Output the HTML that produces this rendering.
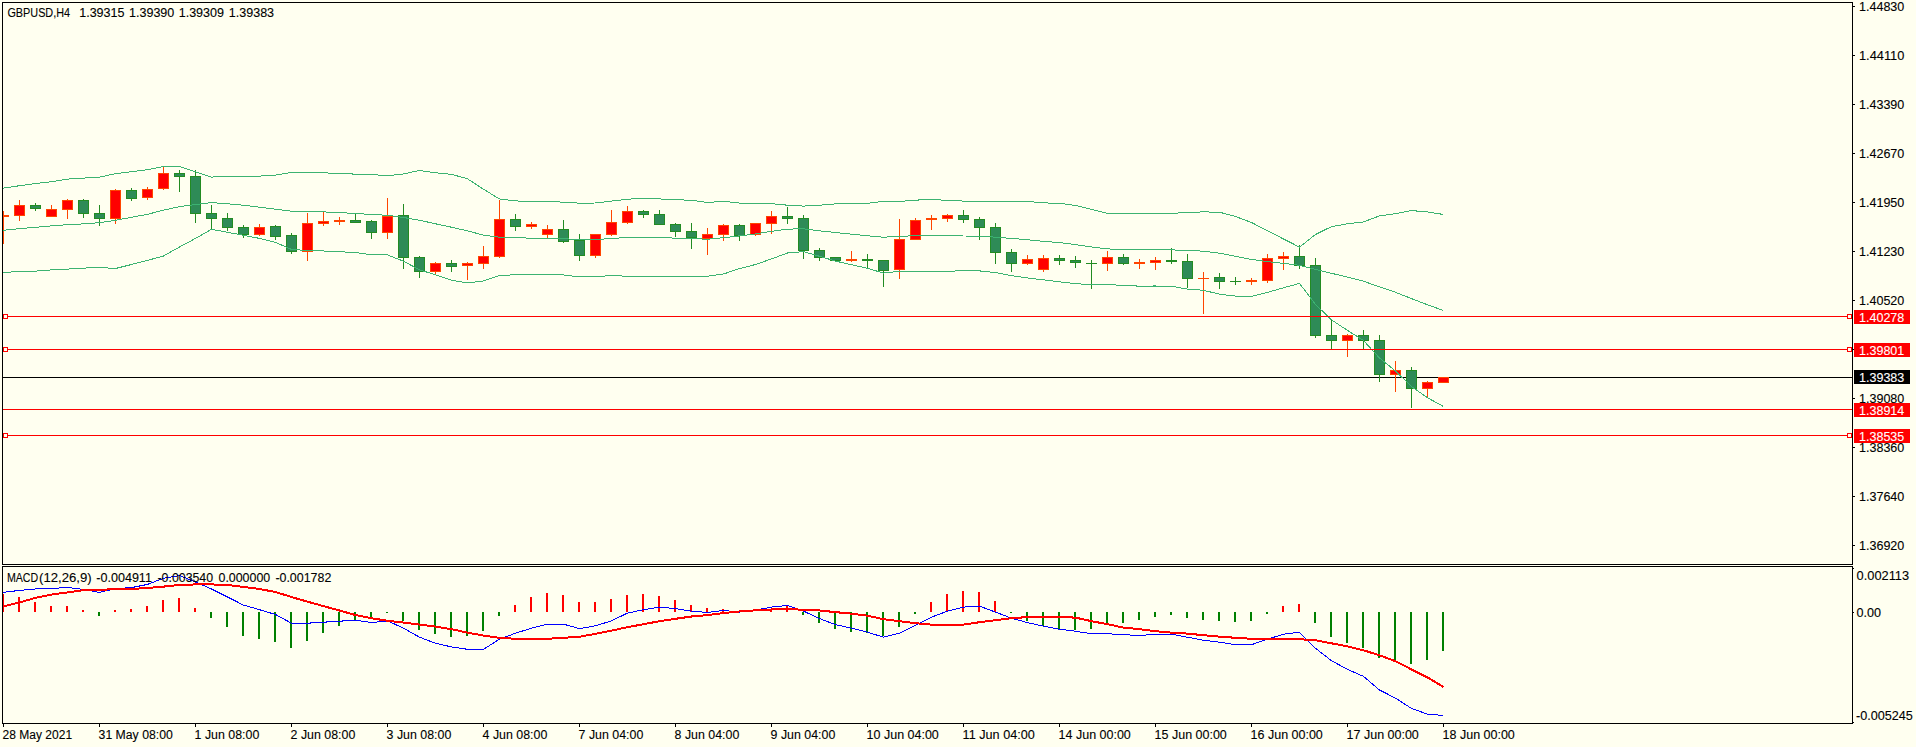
<!DOCTYPE html>
<html><head><meta charset="utf-8"><title>GBPUSD,H4</title>
<style>
html,body{margin:0;padding:0;background:#FFFFF0;}
body{width:1916px;height:747px;overflow:hidden;position:relative;}
svg{position:absolute;left:0;top:0;display:block;}
text{font-family:"Liberation Sans",sans-serif;font-size:12.5px;fill:#000;stroke:#000;stroke-width:0.1px;}
.w{fill:#fff;stroke:#fff;}
</style></head><body>
<svg width="1916" height="747" viewBox="0 0 1916 747">
<rect x="0" y="0" width="1916" height="747" fill="#FFFFF0"/>
<g shape-rendering="crispEdges">
<rect x="2" y="2" width="1851" height="1" fill="#000"/>
<rect x="2" y="564" width="1851" height="1" fill="#000"/>
<rect x="2" y="2" width="1" height="563" fill="#000"/>
<rect x="1852" y="2" width="1" height="563" fill="#000"/>
<rect x="2" y="566" width="1851" height="1" fill="#000"/>
<rect x="2" y="723" width="1851" height="1" fill="#000"/>
<rect x="2" y="566" width="1" height="158" fill="#000"/>
<rect x="1852" y="566" width="1" height="158" fill="#000"/>
<rect x="3" y="377" width="1849" height="1" fill="#000"/>
<g id="candles">
<rect x="3" y="211" width="1" height="33" fill="#FF4500"/>
<rect x="3" y="215" width="6" height="2" fill="#FF4500"/>
<rect x="19" y="200" width="1" height="21" fill="#FF4500"/>
<rect x="14" y="205" width="11" height="11" fill="#FF4500"/>
<rect x="15" y="206" width="9" height="9" fill="#FF0000"/>
<rect x="35" y="203" width="1" height="8" fill="#228B22"/>
<rect x="30" y="205" width="11" height="4" fill="#228B22"/>
<rect x="31" y="206" width="9" height="2" fill="#2E8B57"/>
<rect x="51" y="205" width="1" height="12" fill="#FF4500"/>
<rect x="46" y="209" width="11" height="8" fill="#FF4500"/>
<rect x="47" y="210" width="9" height="6" fill="#FF0000"/>
<rect x="67" y="199" width="1" height="20" fill="#FF4500"/>
<rect x="62" y="200" width="11" height="10" fill="#FF4500"/>
<rect x="63" y="201" width="9" height="8" fill="#FF0000"/>
<rect x="83" y="199" width="1" height="19" fill="#228B22"/>
<rect x="78" y="200" width="11" height="14" fill="#228B22"/>
<rect x="79" y="201" width="9" height="12" fill="#2E8B57"/>
<rect x="99" y="205" width="1" height="21" fill="#228B22"/>
<rect x="94" y="213" width="11" height="6" fill="#228B22"/>
<rect x="95" y="214" width="9" height="4" fill="#2E8B57"/>
<rect x="115" y="189" width="1" height="35" fill="#FF4500"/>
<rect x="110" y="190" width="11" height="29" fill="#FF4500"/>
<rect x="111" y="191" width="9" height="27" fill="#FF0000"/>
<rect x="131" y="188" width="1" height="13" fill="#228B22"/>
<rect x="126" y="190" width="11" height="9" fill="#228B22"/>
<rect x="127" y="191" width="9" height="7" fill="#2E8B57"/>
<rect x="147" y="187" width="1" height="13" fill="#FF4500"/>
<rect x="142" y="189" width="11" height="9" fill="#FF4500"/>
<rect x="143" y="190" width="9" height="7" fill="#FF0000"/>
<rect x="163" y="167" width="1" height="23" fill="#FF4500"/>
<rect x="158" y="173" width="11" height="16" fill="#FF4500"/>
<rect x="159" y="174" width="9" height="14" fill="#FF0000"/>
<rect x="179" y="170" width="1" height="22" fill="#228B22"/>
<rect x="174" y="173" width="11" height="4" fill="#228B22"/>
<rect x="175" y="174" width="9" height="2" fill="#2E8B57"/>
<rect x="195" y="170" width="1" height="53" fill="#228B22"/>
<rect x="190" y="176" width="11" height="38" fill="#228B22"/>
<rect x="191" y="177" width="9" height="36" fill="#2E8B57"/>
<rect x="211" y="205" width="1" height="25" fill="#228B22"/>
<rect x="206" y="213" width="11" height="6" fill="#228B22"/>
<rect x="207" y="214" width="9" height="4" fill="#2E8B57"/>
<rect x="227" y="213" width="1" height="18" fill="#228B22"/>
<rect x="222" y="218" width="11" height="10" fill="#228B22"/>
<rect x="223" y="219" width="9" height="8" fill="#2E8B57"/>
<rect x="243" y="225" width="1" height="13" fill="#228B22"/>
<rect x="238" y="227" width="11" height="8" fill="#228B22"/>
<rect x="239" y="228" width="9" height="6" fill="#2E8B57"/>
<rect x="259" y="224" width="1" height="12" fill="#FF4500"/>
<rect x="254" y="227" width="11" height="8" fill="#FF4500"/>
<rect x="255" y="228" width="9" height="6" fill="#FF0000"/>
<rect x="275" y="225" width="1" height="15" fill="#228B22"/>
<rect x="270" y="226" width="11" height="11" fill="#228B22"/>
<rect x="271" y="227" width="9" height="9" fill="#2E8B57"/>
<rect x="291" y="233" width="1" height="21" fill="#228B22"/>
<rect x="286" y="235" width="11" height="17" fill="#228B22"/>
<rect x="287" y="236" width="9" height="15" fill="#2E8B57"/>
<rect x="307" y="213" width="1" height="48" fill="#FF4500"/>
<rect x="302" y="223" width="11" height="29" fill="#FF4500"/>
<rect x="303" y="224" width="9" height="27" fill="#FF0000"/>
<rect x="323" y="212" width="1" height="14" fill="#FF4500"/>
<rect x="318" y="221" width="11" height="3" fill="#FF4500"/>
<rect x="319" y="222" width="9" height="1" fill="#FF0000"/>
<rect x="339" y="217" width="1" height="8" fill="#FF4500"/>
<rect x="334" y="220" width="11" height="2" fill="#FF4500"/>
<rect x="355" y="214" width="1" height="9" fill="#228B22"/>
<rect x="350" y="220" width="11" height="3" fill="#228B22"/>
<rect x="351" y="221" width="9" height="1" fill="#2E8B57"/>
<rect x="371" y="220" width="1" height="19" fill="#228B22"/>
<rect x="366" y="221" width="11" height="12" fill="#228B22"/>
<rect x="367" y="222" width="9" height="10" fill="#2E8B57"/>
<rect x="387" y="198" width="1" height="41" fill="#FF4500"/>
<rect x="382" y="216" width="11" height="17" fill="#FF4500"/>
<rect x="383" y="217" width="9" height="15" fill="#FF0000"/>
<rect x="403" y="204" width="1" height="65" fill="#228B22"/>
<rect x="398" y="215" width="11" height="43" fill="#228B22"/>
<rect x="399" y="216" width="9" height="41" fill="#2E8B57"/>
<rect x="419" y="256" width="1" height="22" fill="#228B22"/>
<rect x="414" y="257" width="11" height="15" fill="#228B22"/>
<rect x="415" y="258" width="9" height="13" fill="#2E8B57"/>
<rect x="435" y="262" width="1" height="12" fill="#FF4500"/>
<rect x="430" y="263" width="11" height="9" fill="#FF4500"/>
<rect x="431" y="264" width="9" height="7" fill="#FF0000"/>
<rect x="451" y="260" width="1" height="12" fill="#228B22"/>
<rect x="446" y="263" width="11" height="4" fill="#228B22"/>
<rect x="447" y="264" width="9" height="2" fill="#2E8B57"/>
<rect x="467" y="262" width="1" height="18" fill="#FF4500"/>
<rect x="462" y="263" width="11" height="3" fill="#FF4500"/>
<rect x="463" y="264" width="9" height="1" fill="#FF0000"/>
<rect x="483" y="246" width="1" height="23" fill="#FF4500"/>
<rect x="478" y="256" width="11" height="8" fill="#FF4500"/>
<rect x="479" y="257" width="9" height="6" fill="#FF0000"/>
<rect x="499" y="200" width="1" height="58" fill="#FF4500"/>
<rect x="494" y="219" width="11" height="38" fill="#FF4500"/>
<rect x="495" y="220" width="9" height="36" fill="#FF0000"/>
<rect x="515" y="214" width="1" height="17" fill="#228B22"/>
<rect x="510" y="219" width="11" height="8" fill="#228B22"/>
<rect x="511" y="220" width="9" height="6" fill="#2E8B57"/>
<rect x="531" y="222" width="1" height="7" fill="#FF4500"/>
<rect x="526" y="224" width="11" height="3" fill="#FF4500"/>
<rect x="527" y="225" width="9" height="1" fill="#FF0000"/>
<rect x="547" y="225" width="1" height="13" fill="#FF4500"/>
<rect x="542" y="229" width="11" height="6" fill="#FF4500"/>
<rect x="543" y="230" width="9" height="4" fill="#FF0000"/>
<rect x="563" y="220" width="1" height="23" fill="#228B22"/>
<rect x="558" y="229" width="11" height="13" fill="#228B22"/>
<rect x="559" y="230" width="9" height="11" fill="#2E8B57"/>
<rect x="579" y="234" width="1" height="27" fill="#228B22"/>
<rect x="574" y="240" width="11" height="16" fill="#228B22"/>
<rect x="575" y="241" width="9" height="14" fill="#2E8B57"/>
<rect x="595" y="234" width="1" height="24" fill="#FF4500"/>
<rect x="590" y="234" width="11" height="22" fill="#FF4500"/>
<rect x="591" y="235" width="9" height="20" fill="#FF0000"/>
<rect x="611" y="210" width="1" height="26" fill="#FF4500"/>
<rect x="606" y="222" width="11" height="13" fill="#FF4500"/>
<rect x="607" y="223" width="9" height="11" fill="#FF0000"/>
<rect x="627" y="206" width="1" height="18" fill="#FF4500"/>
<rect x="622" y="211" width="11" height="12" fill="#FF4500"/>
<rect x="623" y="212" width="9" height="10" fill="#FF0000"/>
<rect x="643" y="210" width="1" height="8" fill="#228B22"/>
<rect x="638" y="211" width="11" height="4" fill="#228B22"/>
<rect x="639" y="212" width="9" height="2" fill="#2E8B57"/>
<rect x="659" y="210" width="1" height="15" fill="#228B22"/>
<rect x="654" y="214" width="11" height="11" fill="#228B22"/>
<rect x="655" y="215" width="9" height="9" fill="#2E8B57"/>
<rect x="675" y="223" width="1" height="14" fill="#228B22"/>
<rect x="670" y="224" width="11" height="8" fill="#228B22"/>
<rect x="671" y="225" width="9" height="6" fill="#2E8B57"/>
<rect x="691" y="223" width="1" height="26" fill="#228B22"/>
<rect x="686" y="231" width="11" height="7" fill="#228B22"/>
<rect x="687" y="232" width="9" height="5" fill="#2E8B57"/>
<rect x="707" y="228" width="1" height="27" fill="#FF4500"/>
<rect x="702" y="234" width="11" height="5" fill="#FF4500"/>
<rect x="703" y="235" width="9" height="3" fill="#FF0000"/>
<rect x="723" y="224" width="1" height="17" fill="#FF4500"/>
<rect x="718" y="225" width="11" height="10" fill="#FF4500"/>
<rect x="719" y="226" width="9" height="8" fill="#FF0000"/>
<rect x="739" y="224" width="1" height="17" fill="#228B22"/>
<rect x="734" y="225" width="11" height="11" fill="#228B22"/>
<rect x="735" y="226" width="9" height="9" fill="#2E8B57"/>
<rect x="755" y="223" width="1" height="13" fill="#FF4500"/>
<rect x="750" y="223" width="11" height="12" fill="#FF4500"/>
<rect x="751" y="224" width="9" height="10" fill="#FF0000"/>
<rect x="771" y="211" width="1" height="23" fill="#FF4500"/>
<rect x="766" y="216" width="11" height="8" fill="#FF4500"/>
<rect x="767" y="217" width="9" height="6" fill="#FF0000"/>
<rect x="787" y="207" width="1" height="17" fill="#228B22"/>
<rect x="782" y="216" width="11" height="3" fill="#228B22"/>
<rect x="783" y="217" width="9" height="1" fill="#2E8B57"/>
<rect x="803" y="215" width="1" height="44" fill="#228B22"/>
<rect x="798" y="218" width="11" height="33" fill="#228B22"/>
<rect x="799" y="219" width="9" height="31" fill="#2E8B57"/>
<rect x="819" y="248" width="1" height="13" fill="#228B22"/>
<rect x="814" y="250" width="11" height="8" fill="#228B22"/>
<rect x="815" y="251" width="9" height="6" fill="#2E8B57"/>
<rect x="835" y="257" width="1" height="5" fill="#228B22"/>
<rect x="830" y="257" width="11" height="4" fill="#228B22"/>
<rect x="831" y="258" width="9" height="2" fill="#2E8B57"/>
<rect x="851" y="251" width="1" height="11" fill="#FF4500"/>
<rect x="846" y="259" width="11" height="2" fill="#FF4500"/>
<rect x="867" y="254" width="1" height="15" fill="#228B22"/>
<rect x="862" y="259" width="11" height="2" fill="#228B22"/>
<rect x="883" y="260" width="1" height="27" fill="#228B22"/>
<rect x="878" y="260" width="11" height="11" fill="#228B22"/>
<rect x="879" y="261" width="9" height="9" fill="#2E8B57"/>
<rect x="899" y="219" width="1" height="60" fill="#FF4500"/>
<rect x="894" y="239" width="11" height="31" fill="#FF4500"/>
<rect x="895" y="240" width="9" height="29" fill="#FF0000"/>
<rect x="915" y="218" width="1" height="22" fill="#FF4500"/>
<rect x="910" y="220" width="11" height="20" fill="#FF4500"/>
<rect x="911" y="221" width="9" height="18" fill="#FF0000"/>
<rect x="931" y="215" width="1" height="15" fill="#FF4500"/>
<rect x="926" y="218" width="11" height="2" fill="#FF4500"/>
<rect x="947" y="214" width="1" height="8" fill="#FF4500"/>
<rect x="942" y="215" width="11" height="4" fill="#FF4500"/>
<rect x="943" y="216" width="9" height="2" fill="#FF0000"/>
<rect x="963" y="210" width="1" height="13" fill="#228B22"/>
<rect x="958" y="215" width="11" height="5" fill="#228B22"/>
<rect x="959" y="216" width="9" height="3" fill="#2E8B57"/>
<rect x="979" y="217" width="1" height="23" fill="#228B22"/>
<rect x="974" y="219" width="11" height="9" fill="#228B22"/>
<rect x="975" y="220" width="9" height="7" fill="#2E8B57"/>
<rect x="995" y="223" width="1" height="41" fill="#228B22"/>
<rect x="990" y="227" width="11" height="26" fill="#228B22"/>
<rect x="991" y="228" width="9" height="24" fill="#2E8B57"/>
<rect x="1011" y="249" width="1" height="23" fill="#228B22"/>
<rect x="1006" y="252" width="11" height="12" fill="#228B22"/>
<rect x="1007" y="253" width="9" height="10" fill="#2E8B57"/>
<rect x="1027" y="255" width="1" height="10" fill="#FF4500"/>
<rect x="1022" y="259" width="11" height="5" fill="#FF4500"/>
<rect x="1023" y="260" width="9" height="3" fill="#FF0000"/>
<rect x="1043" y="255" width="1" height="17" fill="#FF4500"/>
<rect x="1038" y="258" width="11" height="12" fill="#FF4500"/>
<rect x="1039" y="259" width="9" height="10" fill="#FF0000"/>
<rect x="1059" y="255" width="1" height="10" fill="#228B22"/>
<rect x="1054" y="258" width="11" height="3" fill="#228B22"/>
<rect x="1055" y="259" width="9" height="1" fill="#2E8B57"/>
<rect x="1075" y="256" width="1" height="12" fill="#228B22"/>
<rect x="1070" y="260" width="11" height="3" fill="#228B22"/>
<rect x="1071" y="261" width="9" height="1" fill="#2E8B57"/>
<rect x="1091" y="260" width="1" height="29" fill="#228B22"/>
<rect x="1086" y="263" width="11" height="1" fill="#228B22"/>
<rect x="1107" y="251" width="1" height="20" fill="#FF4500"/>
<rect x="1102" y="257" width="11" height="7" fill="#FF4500"/>
<rect x="1103" y="258" width="9" height="5" fill="#FF0000"/>
<rect x="1123" y="254" width="1" height="11" fill="#228B22"/>
<rect x="1118" y="257" width="11" height="7" fill="#228B22"/>
<rect x="1119" y="258" width="9" height="5" fill="#2E8B57"/>
<rect x="1139" y="259" width="1" height="10" fill="#FF4500"/>
<rect x="1134" y="262" width="11" height="2" fill="#FF4500"/>
<rect x="1155" y="257" width="1" height="13" fill="#FF4500"/>
<rect x="1150" y="260" width="11" height="3" fill="#FF4500"/>
<rect x="1151" y="261" width="9" height="1" fill="#FF0000"/>
<rect x="1171" y="248" width="1" height="16" fill="#228B22"/>
<rect x="1166" y="260" width="11" height="2" fill="#228B22"/>
<rect x="1187" y="254" width="1" height="34" fill="#228B22"/>
<rect x="1182" y="261" width="11" height="18" fill="#228B22"/>
<rect x="1183" y="262" width="9" height="16" fill="#2E8B57"/>
<rect x="1203" y="272" width="1" height="42" fill="#FF4500"/>
<rect x="1198" y="278" width="11" height="1" fill="#FF4500"/>
<rect x="1219" y="273" width="1" height="16" fill="#228B22"/>
<rect x="1214" y="277" width="11" height="5" fill="#228B22"/>
<rect x="1215" y="278" width="9" height="3" fill="#2E8B57"/>
<rect x="1235" y="277" width="1" height="8" fill="#228B22"/>
<rect x="1230" y="281" width="11" height="1" fill="#228B22"/>
<rect x="1251" y="278" width="1" height="7" fill="#FF4500"/>
<rect x="1246" y="280" width="11" height="2" fill="#FF4500"/>
<rect x="1267" y="254" width="1" height="29" fill="#FF4500"/>
<rect x="1262" y="258" width="11" height="23" fill="#FF4500"/>
<rect x="1263" y="259" width="9" height="21" fill="#FF0000"/>
<rect x="1283" y="252" width="1" height="18" fill="#FF4500"/>
<rect x="1278" y="256" width="11" height="3" fill="#FF4500"/>
<rect x="1279" y="257" width="9" height="1" fill="#FF0000"/>
<rect x="1299" y="245" width="1" height="24" fill="#228B22"/>
<rect x="1294" y="256" width="11" height="10" fill="#228B22"/>
<rect x="1295" y="257" width="9" height="8" fill="#2E8B57"/>
<rect x="1315" y="258" width="1" height="80" fill="#228B22"/>
<rect x="1310" y="265" width="11" height="71" fill="#228B22"/>
<rect x="1311" y="266" width="9" height="69" fill="#2E8B57"/>
<rect x="1331" y="320" width="1" height="29" fill="#228B22"/>
<rect x="1326" y="335" width="11" height="6" fill="#228B22"/>
<rect x="1327" y="336" width="9" height="4" fill="#2E8B57"/>
<rect x="1347" y="334" width="1" height="23" fill="#FF4500"/>
<rect x="1342" y="335" width="11" height="6" fill="#FF4500"/>
<rect x="1343" y="336" width="9" height="4" fill="#FF0000"/>
<rect x="1363" y="330" width="1" height="19" fill="#228B22"/>
<rect x="1358" y="335" width="11" height="6" fill="#228B22"/>
<rect x="1359" y="336" width="9" height="4" fill="#2E8B57"/>
<rect x="1379" y="335" width="1" height="47" fill="#228B22"/>
<rect x="1374" y="340" width="11" height="35" fill="#228B22"/>
<rect x="1375" y="341" width="9" height="33" fill="#2E8B57"/>
<rect x="1395" y="361" width="1" height="31" fill="#FF4500"/>
<rect x="1390" y="370" width="11" height="5" fill="#FF4500"/>
<rect x="1391" y="371" width="9" height="3" fill="#FF0000"/>
<rect x="1411" y="367" width="1" height="41" fill="#228B22"/>
<rect x="1406" y="370" width="11" height="19" fill="#228B22"/>
<rect x="1407" y="371" width="9" height="17" fill="#2E8B57"/>
<rect x="1427" y="381" width="1" height="16" fill="#FF4500"/>
<rect x="1422" y="382" width="11" height="7" fill="#FF4500"/>
<rect x="1423" y="383" width="9" height="5" fill="#FF0000"/>
<rect x="1443" y="377" width="1" height="6" fill="#FF4500"/>
<rect x="1438" y="377" width="11" height="6" fill="#FF4500"/>
<rect x="1439" y="378" width="9" height="4" fill="#FF0000"/>
</g>
</g>
<g shape-rendering="crispEdges">
<polyline points="3,188.2 19.5,185.7 35.5,183.5 51.5,181.7 67.5,179.1 83.5,178.1 99.5,177.1 115.5,173.7 131.5,171.7 147.5,169.7 163.5,166.5 179.5,166.5 195.5,171.7 211.5,177.1 227.5,176.1 243.5,176.1 259.5,176.1 275.5,175.1 291.5,172.5 307.5,172.7 323.5,172.8 339.5,173.6 355.5,174.1 371.5,174.4 387.5,175.8 403.5,173.9 419.5,170.5 435.5,172.8 451.5,174.3 467.5,178.8 483.5,189.2 499.5,199.0 515.5,200.9 531.5,201.6 547.5,201.7 563.5,202.1 579.5,203.2 595.5,203.0 611.5,201.1 627.5,199.2 643.5,198.3 659.5,198.9 675.5,199.8 691.5,200.2 707.5,202.5 723.5,201.3 739.5,203.1 755.5,203.2 771.5,203.7 787.5,205.2 803.5,206.1 819.5,205.2 835.5,203.9 851.5,203.7 867.5,203.3 883.5,201.4 899.5,201.5 915.5,200.1 931.5,199.6 947.5,200.3 963.5,201.1 979.5,201.4 995.5,201.7 1011.5,201.2 1027.5,201.4 1043.5,202.9 1059.5,203.3 1075.5,205.5 1091.5,209.3 1107.5,213.3 1123.5,213.4 1139.5,213.4 1155.5,213.4 1171.5,213.4 1187.5,212.4 1203.5,211.9 1219.5,212.2 1235.5,216.5 1251.5,222.5 1267.5,230.7 1283.5,239.0 1299.5,247.1 1315.5,234.5 1331.5,226.6 1347.5,223.8 1363.5,221.9 1379.5,215.9 1395.5,213.6 1411.5,210.6 1427.5,211.9 1443.5,214.5" fill="none" stroke="#3CB371" stroke-width="1" />
<polyline points="3,230.3 19.5,228.7 35.5,227.3 51.5,225.9 67.5,224.7 83.5,223.9 99.5,222.7 115.5,220.3 131.5,217.3 147.5,214.3 163.5,210.2 179.5,206.6 195.5,204.6 211.5,202.6 227.5,203.8 243.5,205.2 259.5,207.2 275.5,209.2 291.5,211.2 307.5,211.6 323.5,211.9 339.5,212.7 355.5,213.4 371.5,214.5 387.5,215.3 403.5,217.5 419.5,220.2 435.5,223.8 451.5,227.2 467.5,230.9 483.5,235.1 499.5,237.2 515.5,237.8 531.5,238.1 547.5,238.2 563.5,238.5 579.5,240.0 595.5,239.8 611.5,238.3 627.5,237.7 643.5,237.4 659.5,237.7 675.5,238.1 691.5,238.4 707.5,239.3 723.5,237.7 739.5,235.9 755.5,233.9 771.5,231.3 787.5,229.1 803.5,228.8 819.5,230.8 835.5,232.5 851.5,234.2 867.5,235.8 883.5,237.2 899.5,236.4 915.5,235.7 931.5,235.5 947.5,235.7 963.5,236.0 979.5,236.1 995.5,237.2 1011.5,238.4 1027.5,239.7 1043.5,241.4 1059.5,242.6 1075.5,244.6 1091.5,247.0 1107.5,248.9 1123.5,249.5 1139.5,249.7 1155.5,249.7 1171.5,249.8 1187.5,250.7 1203.5,251.1 1219.5,253.2 1235.5,256.3 1251.5,259.4 1267.5,261.6 1283.5,263.4 1299.5,265.3 1315.5,269.4 1331.5,273.3 1347.5,277.1 1363.5,281.2 1379.5,286.9 1395.5,292.3 1411.5,298.6 1427.5,304.8 1443.5,310.5" fill="none" stroke="#3CB371" stroke-width="1" />
<polyline points="3,272.1 19.5,271.9 35.5,271.1 51.5,269.9 67.5,269.1 83.5,268.1 99.5,267.5 115.5,268.5 131.5,264.5 147.5,260.4 163.5,256.0 179.5,247.0 195.5,238.4 211.5,229.3 227.5,232.3 243.5,235.3 259.5,238.4 275.5,242.4 291.5,249.4 307.5,250.5 323.5,251.0 339.5,251.7 355.5,252.6 371.5,254.7 387.5,254.9 403.5,261.2 419.5,269.8 435.5,274.8 451.5,280.2 467.5,283.0 483.5,281.0 499.5,275.4 515.5,274.8 531.5,274.6 547.5,274.6 563.5,275.0 579.5,276.8 595.5,276.7 611.5,275.5 627.5,276.3 643.5,276.6 659.5,276.5 675.5,276.4 691.5,276.6 707.5,276.2 723.5,274.0 739.5,268.6 755.5,264.5 771.5,258.9 787.5,253.0 803.5,251.6 819.5,256.3 835.5,261.1 851.5,264.7 867.5,268.3 883.5,273.1 899.5,271.3 915.5,271.3 931.5,271.5 947.5,271.1 963.5,270.9 979.5,270.9 995.5,272.6 1011.5,275.7 1027.5,278.0 1043.5,279.8 1059.5,281.8 1075.5,283.7 1091.5,284.6 1107.5,284.4 1123.5,285.6 1139.5,286.1 1155.5,286.0 1171.5,286.3 1187.5,289.1 1203.5,290.3 1219.5,294.2 1235.5,296.1 1251.5,296.4 1267.5,292.4 1283.5,287.8 1299.5,283.4 1315.5,304.4 1331.5,319.9 1347.5,330.4 1363.5,340.5 1379.5,358.0 1395.5,371.0 1411.5,386.5 1427.5,397.8 1443.5,406.5" fill="none" stroke="#3CB371" stroke-width="1" />
</g>
<g shape-rendering="crispEdges">
<rect x="3" y="316" width="1849" height="1" fill="#FF0000"/>
<rect x="3.5" y="314.5" width="4" height="4" fill="#FFFFF0" stroke="#FF0000" stroke-width="1"/>
<rect x="1847.5" y="314.5" width="4" height="4" fill="#FFFFF0" stroke="#FF0000" stroke-width="1"/>
<rect x="3" y="349" width="1849" height="1" fill="#FF0000"/>
<rect x="3.5" y="347.5" width="4" height="4" fill="#FFFFF0" stroke="#FF0000" stroke-width="1"/>
<rect x="1847.5" y="347.5" width="4" height="4" fill="#FFFFF0" stroke="#FF0000" stroke-width="1"/>
<rect x="3" y="409" width="1849" height="1" fill="#FF0000"/>
<rect x="3" y="435" width="1849" height="1" fill="#FF0000"/>
<rect x="3.5" y="433.5" width="4" height="4" fill="#FFFFF0" stroke="#FF0000" stroke-width="1"/>
<rect x="1847.5" y="433.5" width="4" height="4" fill="#FFFFF0" stroke="#FF0000" stroke-width="1"/>
<rect x="1853" y="6" width="2" height="1" fill="#000"/>
<rect x="1853" y="55" width="2" height="1" fill="#000"/>
<rect x="1853" y="104" width="2" height="1" fill="#000"/>
<rect x="1853" y="153" width="2" height="1" fill="#000"/>
<rect x="1853" y="202" width="2" height="1" fill="#000"/>
<rect x="1853" y="251" width="2" height="1" fill="#000"/>
<rect x="1853" y="300" width="2" height="1" fill="#000"/>
<rect x="1853" y="349" width="2" height="1" fill="#000"/>
<rect x="1853" y="398" width="2" height="1" fill="#000"/>
<rect x="1853" y="447" width="2" height="1" fill="#000"/>
<rect x="1853" y="496" width="2" height="1" fill="#000"/>
<rect x="1853" y="545" width="2" height="1" fill="#000"/>
<rect x="1853" y="612" width="1" height="1" fill="#000"/>
<rect x="1853" y="568" width="1" height="1" fill="#000"/>
<rect x="1853" y="722" width="1" height="1" fill="#000"/>
<rect x="3" y="724" width="1" height="3" fill="#000"/>
<rect x="99" y="724" width="1" height="3" fill="#000"/>
<rect x="195" y="724" width="1" height="3" fill="#000"/>
<rect x="291" y="724" width="1" height="3" fill="#000"/>
<rect x="387" y="724" width="1" height="3" fill="#000"/>
<rect x="483" y="724" width="1" height="3" fill="#000"/>
<rect x="579" y="724" width="1" height="3" fill="#000"/>
<rect x="675" y="724" width="1" height="3" fill="#000"/>
<rect x="771" y="724" width="1" height="3" fill="#000"/>
<rect x="867" y="724" width="1" height="3" fill="#000"/>
<rect x="963" y="724" width="1" height="3" fill="#000"/>
<rect x="1059" y="724" width="1" height="3" fill="#000"/>
<rect x="1155" y="724" width="1" height="3" fill="#000"/>
<rect x="1251" y="724" width="1" height="3" fill="#000"/>
<rect x="1347" y="724" width="1" height="3" fill="#000"/>
<rect x="1443" y="724" width="1" height="3" fill="#000"/>
<rect x="2" y="594" width="2" height="18" fill="#FF0000"/>
<rect x="18" y="597" width="2" height="15" fill="#FF0000"/>
<rect x="34" y="602" width="2" height="10" fill="#FF0000"/>
<rect x="50" y="606" width="2" height="6" fill="#FF0000"/>
<rect x="66" y="606" width="2" height="6" fill="#FF0000"/>
<rect x="82" y="610" width="2" height="2" fill="#FF0000"/>
<rect x="98" y="612" width="2" height="4" fill="#008000"/>
<rect x="114" y="610" width="2" height="2" fill="#FF0000"/>
<rect x="130" y="609" width="2" height="3" fill="#FF0000"/>
<rect x="146" y="606" width="2" height="6" fill="#FF0000"/>
<rect x="162" y="600" width="2" height="12" fill="#FF0000"/>
<rect x="178" y="598" width="2" height="14" fill="#FF0000"/>
<rect x="194" y="608" width="2" height="4" fill="#FF0000"/>
<rect x="210" y="612" width="2" height="6" fill="#008000"/>
<rect x="226" y="612" width="2" height="15" fill="#008000"/>
<rect x="242" y="612" width="2" height="24" fill="#008000"/>
<rect x="258" y="612" width="2" height="27" fill="#008000"/>
<rect x="274" y="612" width="2" height="30" fill="#008000"/>
<rect x="290" y="612" width="2" height="36" fill="#008000"/>
<rect x="306" y="612" width="2" height="29" fill="#008000"/>
<rect x="322" y="612" width="2" height="21" fill="#008000"/>
<rect x="338" y="612" width="2" height="14" fill="#008000"/>
<rect x="354" y="612" width="2" height="8" fill="#008000"/>
<rect x="370" y="612" width="2" height="7" fill="#008000"/>
<rect x="386" y="612" width="2" height="1" fill="#008000"/>
<rect x="402" y="612" width="2" height="9" fill="#008000"/>
<rect x="418" y="612" width="2" height="18" fill="#008000"/>
<rect x="434" y="612" width="2" height="22" fill="#008000"/>
<rect x="450" y="612" width="2" height="25" fill="#008000"/>
<rect x="466" y="612" width="2" height="24" fill="#008000"/>
<rect x="482" y="612" width="2" height="19" fill="#008000"/>
<rect x="498" y="612" width="2" height="4" fill="#008000"/>
<rect x="514" y="605" width="2" height="7" fill="#FF0000"/>
<rect x="530" y="597" width="2" height="15" fill="#FF0000"/>
<rect x="546" y="593" width="2" height="19" fill="#FF0000"/>
<rect x="562" y="595" width="2" height="17" fill="#FF0000"/>
<rect x="578" y="602" width="2" height="10" fill="#FF0000"/>
<rect x="594" y="602" width="2" height="10" fill="#FF0000"/>
<rect x="610" y="599" width="2" height="13" fill="#FF0000"/>
<rect x="626" y="595" width="2" height="17" fill="#FF0000"/>
<rect x="642" y="594" width="2" height="18" fill="#FF0000"/>
<rect x="658" y="596" width="2" height="16" fill="#FF0000"/>
<rect x="674" y="600" width="2" height="12" fill="#FF0000"/>
<rect x="690" y="605" width="2" height="7" fill="#FF0000"/>
<rect x="706" y="608" width="2" height="4" fill="#FF0000"/>
<rect x="722" y="609" width="2" height="3" fill="#FF0000"/>
<rect x="738" y="612" width="2" height="1" fill="#008000"/>
<rect x="770" y="609" width="2" height="3" fill="#FF0000"/>
<rect x="786" y="606" width="2" height="6" fill="#FF0000"/>
<rect x="802" y="612" width="2" height="3" fill="#008000"/>
<rect x="818" y="612" width="2" height="11" fill="#008000"/>
<rect x="834" y="612" width="2" height="17" fill="#008000"/>
<rect x="850" y="612" width="2" height="20" fill="#008000"/>
<rect x="866" y="612" width="2" height="21" fill="#008000"/>
<rect x="882" y="612" width="2" height="24" fill="#008000"/>
<rect x="898" y="612" width="2" height="15" fill="#008000"/>
<rect x="914" y="612" width="2" height="2" fill="#008000"/>
<rect x="930" y="602" width="2" height="10" fill="#FF0000"/>
<rect x="946" y="594" width="2" height="18" fill="#FF0000"/>
<rect x="962" y="591" width="2" height="21" fill="#FF0000"/>
<rect x="978" y="592" width="2" height="20" fill="#FF0000"/>
<rect x="994" y="601" width="2" height="11" fill="#FF0000"/>
<rect x="1010" y="612" width="2" height="1" fill="#008000"/>
<rect x="1026" y="612" width="2" height="9" fill="#008000"/>
<rect x="1042" y="612" width="2" height="14" fill="#008000"/>
<rect x="1058" y="612" width="2" height="17" fill="#008000"/>
<rect x="1074" y="612" width="2" height="18" fill="#008000"/>
<rect x="1090" y="612" width="2" height="17" fill="#008000"/>
<rect x="1106" y="612" width="2" height="13" fill="#008000"/>
<rect x="1122" y="612" width="2" height="11" fill="#008000"/>
<rect x="1138" y="612" width="2" height="8" fill="#008000"/>
<rect x="1154" y="612" width="2" height="5" fill="#008000"/>
<rect x="1170" y="612" width="2" height="3" fill="#008000"/>
<rect x="1186" y="612" width="2" height="6" fill="#008000"/>
<rect x="1202" y="612" width="2" height="8" fill="#008000"/>
<rect x="1218" y="612" width="2" height="9" fill="#008000"/>
<rect x="1234" y="612" width="2" height="10" fill="#008000"/>
<rect x="1250" y="612" width="2" height="9" fill="#008000"/>
<rect x="1266" y="612" width="2" height="2" fill="#008000"/>
<rect x="1282" y="606" width="2" height="6" fill="#FF0000"/>
<rect x="1298" y="604" width="2" height="8" fill="#FF0000"/>
<rect x="1314" y="612" width="2" height="11" fill="#008000"/>
<rect x="1330" y="612" width="2" height="25" fill="#008000"/>
<rect x="1346" y="612" width="2" height="31" fill="#008000"/>
<rect x="1362" y="612" width="2" height="36" fill="#008000"/>
<rect x="1378" y="612" width="2" height="46" fill="#008000"/>
<rect x="1394" y="612" width="2" height="49" fill="#008000"/>
<rect x="1410" y="612" width="2" height="52" fill="#008000"/>
<rect x="1426" y="612" width="2" height="48" fill="#008000"/>
<rect x="1442" y="612" width="2" height="39" fill="#008000"/>
</g>
<g shape-rendering="crispEdges">
<polyline points="3,592.4 19.5,590.4 35.5,589.0 51.5,588.6 67.5,587.4 83.5,589.4 99.5,592.4 115.5,588.6 131.5,587.6 147.5,584.4 163.5,578.3 179.5,575.5 195.5,582.0 211.5,589.0 227.5,597.0 243.5,605.1 259.5,609.7 275.5,614.5 291.5,623.2 307.5,623.2 323.5,622.2 339.5,621.2 355.5,620.2 371.5,622.6 387.5,620.8 403.5,628.2 419.5,637.2 435.5,643.3 451.5,646.9 467.5,649.3 483.5,649.3 499.5,639.2 515.5,633.2 531.5,628.2 547.5,624.2 563.5,624.2 579.5,628.6 595.5,625.8 611.5,620.8 627.5,613.1 643.5,609.7 659.5,607.1 675.5,608.7 691.5,611.1 707.5,612.5 723.5,610.5 739.5,612.1 755.5,610.1 771.5,607.1 787.5,605.5 803.5,611.1 819.5,618.6 835.5,624.6 851.5,628.2 867.5,632.2 883.5,637.2 899.5,633.2 915.5,625.2 931.5,617.1 947.5,611.1 963.5,607.1 979.5,606.1 995.5,612.1 1011.5,618.2 1027.5,622.6 1043.5,626.2 1059.5,629.2 1075.5,631.2 1091.5,633.8 1107.5,633.8 1123.5,634.6 1139.5,635.6 1155.5,634.2 1171.5,634.2 1187.5,637.2 1203.5,640.2 1219.5,642.2 1235.5,644.7 1251.5,644.7 1267.5,639.2 1283.5,634.2 1299.5,632.2 1315.5,648.3 1331.5,660.7 1347.5,669.4 1363.5,676.4 1379.5,690.0 1395.5,698.1 1411.5,708.5 1427.5,714.1 1443.5,715.5" fill="none" stroke="#0000FF" stroke-width="1" />
<polyline points="3,606.4 19.5,602.5 35.5,597.8 51.5,594.6 67.5,592.4 83.5,590.2 99.5,589.6 115.5,589.4 131.5,589.0 147.5,588.0 163.5,586.6 179.5,585.0 195.5,584.4 211.5,584.4 227.5,585.0 243.5,587.0 259.5,589.0 275.5,592.0 291.5,597.0 307.5,601.7 323.5,606.1 339.5,610.5 355.5,615.1 371.5,618.2 387.5,620.8 403.5,622.6 419.5,624.6 435.5,626.6 451.5,629.2 467.5,632.6 483.5,635.6 499.5,637.8 515.5,638.8 531.5,638.8 547.5,638.8 563.5,637.8 579.5,636.8 595.5,633.8 611.5,630.6 627.5,627.2 643.5,624.2 659.5,621.2 675.5,618.8 691.5,616.5 707.5,615.1 723.5,613.1 739.5,611.5 755.5,610.3 771.5,609.5 787.5,609.1 803.5,609.7 819.5,610.5 835.5,612.1 851.5,613.7 867.5,615.7 883.5,619.2 899.5,621.2 915.5,623.2 931.5,624.6 947.5,624.6 963.5,624.6 979.5,622.2 995.5,620.2 1011.5,618.2 1027.5,617.1 1043.5,617.1 1059.5,617.1 1075.5,617.6 1091.5,621.2 1107.5,624.2 1123.5,627.6 1139.5,629.2 1155.5,631.2 1171.5,632.6 1187.5,633.6 1203.5,635.2 1219.5,636.6 1235.5,637.8 1251.5,638.8 1267.5,638.8 1283.5,638.8 1299.5,639.2 1315.5,640.2 1331.5,643.3 1347.5,646.3 1363.5,650.3 1379.5,655.3 1395.5,661.3 1411.5,669.4 1427.5,677.4 1443.5,687.0" fill="none" stroke="#FF0000" stroke-width="2" />
</g>
<g shape-rendering="crispEdges">
</g>
<text x="1859.0" y="11.0" textLength="45.3" lengthAdjust="spacingAndGlyphs">1.44830</text>
<text x="1859.0" y="60.0" textLength="45.3" lengthAdjust="spacingAndGlyphs">1.44110</text>
<text x="1859.0" y="109.0" textLength="45.3" lengthAdjust="spacingAndGlyphs">1.43390</text>
<text x="1859.0" y="158.0" textLength="45.3" lengthAdjust="spacingAndGlyphs">1.42670</text>
<text x="1859.0" y="207.0" textLength="45.3" lengthAdjust="spacingAndGlyphs">1.41950</text>
<text x="1859.0" y="256.0" textLength="45.3" lengthAdjust="spacingAndGlyphs">1.41230</text>
<text x="1859.0" y="305.0" textLength="45.3" lengthAdjust="spacingAndGlyphs">1.40520</text>
<text x="1859.0" y="354.0" textLength="45.3" lengthAdjust="spacingAndGlyphs">1.39800</text>
<text x="1859.0" y="403.0" textLength="45.3" lengthAdjust="spacingAndGlyphs">1.39080</text>
<text x="1859.0" y="452.0" textLength="45.3" lengthAdjust="spacingAndGlyphs">1.38360</text>
<text x="1859.0" y="501.0" textLength="45.3" lengthAdjust="spacingAndGlyphs">1.37640</text>
<text x="1859.0" y="550.0" textLength="45.3" lengthAdjust="spacingAndGlyphs">1.36920</text>
<g shape-rendering="crispEdges">
<rect x="1854" y="310" width="56" height="14" fill="#FF0000"/>
<rect x="1854" y="343" width="56" height="14" fill="#FF0000"/>
<rect x="1854" y="370" width="56" height="14" fill="#000000"/>
<rect x="1854" y="403" width="56" height="14" fill="#FF0000"/>
<rect x="1854" y="429" width="56" height="14" fill="#FF0000"/>
</g>
<text x="1859.0" y="322.3" textLength="45.3" lengthAdjust="spacingAndGlyphs" class="w">1.40278</text>
<text x="1859.0" y="355.3" textLength="45.3" lengthAdjust="spacingAndGlyphs" class="w">1.39801</text>
<text x="1859.0" y="382.3" textLength="45.3" lengthAdjust="spacingAndGlyphs" class="w">1.39383</text>
<text x="1859.0" y="415.3" textLength="45.3" lengthAdjust="spacingAndGlyphs" class="w">1.38914</text>
<text x="1859.0" y="441.3" textLength="45.3" lengthAdjust="spacingAndGlyphs" class="w">1.38535</text>
<text x="1856.6" y="579.7" textLength="52.5" lengthAdjust="spacingAndGlyphs">0.002113</text>
<text x="1856.6" y="617" textLength="24.5" lengthAdjust="spacingAndGlyphs">0.00</text>
<text x="1856" y="719.7" textLength="56.9" lengthAdjust="spacingAndGlyphs">-0.005245</text>
<text x="7.4" y="17" textLength="62.7" lengthAdjust="spacingAndGlyphs">GBPUSD,H4</text>
<text x="79.2" y="17" textLength="45.3" lengthAdjust="spacingAndGlyphs">1.39315</text>
<text x="129.0" y="17" textLength="45.3" lengthAdjust="spacingAndGlyphs">1.39390</text>
<text x="178.7" y="17" textLength="45.3" lengthAdjust="spacingAndGlyphs">1.39309</text>
<text x="228.8" y="17" textLength="45.3" lengthAdjust="spacingAndGlyphs">1.39383</text>
<text x="6.9" y="582" textLength="31.3" lengthAdjust="spacingAndGlyphs">MACD</text>
<text x="39.0" y="582" textLength="52.7" lengthAdjust="spacingAndGlyphs">(12,26,9)</text>
<text x="96.3" y="582" textLength="55.6" lengthAdjust="spacingAndGlyphs">-0.004911</text>
<text x="157.5" y="582" textLength="55.6" lengthAdjust="spacingAndGlyphs">-0.003540</text>
<text x="218.5" y="582" textLength="51.7" lengthAdjust="spacingAndGlyphs">0.000000</text>
<text x="275.4" y="582" textLength="55.9" lengthAdjust="spacingAndGlyphs">-0.001782</text>
<text x="2.6" y="739.2" textLength="69.5" lengthAdjust="spacingAndGlyphs">28 May 2021</text>
<text x="98.6" y="739.2" textLength="74.2" lengthAdjust="spacingAndGlyphs">31 May 08:00</text>
<text x="194.6" y="739.2" textLength="64.7" lengthAdjust="spacingAndGlyphs">1 Jun 08:00</text>
<text x="290.6" y="739.2" textLength="64.7" lengthAdjust="spacingAndGlyphs">2 Jun 08:00</text>
<text x="386.6" y="739.2" textLength="64.7" lengthAdjust="spacingAndGlyphs">3 Jun 08:00</text>
<text x="482.6" y="739.2" textLength="64.7" lengthAdjust="spacingAndGlyphs">4 Jun 08:00</text>
<text x="578.6" y="739.2" textLength="64.7" lengthAdjust="spacingAndGlyphs">7 Jun 04:00</text>
<text x="674.6" y="739.2" textLength="64.7" lengthAdjust="spacingAndGlyphs">8 Jun 04:00</text>
<text x="770.6" y="739.2" textLength="64.7" lengthAdjust="spacingAndGlyphs">9 Jun 04:00</text>
<text x="866.6" y="739.2" textLength="72.2" lengthAdjust="spacingAndGlyphs">10 Jun 04:00</text>
<text x="962.6" y="739.2" textLength="72.2" lengthAdjust="spacingAndGlyphs">11 Jun 04:00</text>
<text x="1058.6" y="739.2" textLength="72.2" lengthAdjust="spacingAndGlyphs">14 Jun 00:00</text>
<text x="1154.6" y="739.2" textLength="72.2" lengthAdjust="spacingAndGlyphs">15 Jun 00:00</text>
<text x="1250.6" y="739.2" textLength="72.2" lengthAdjust="spacingAndGlyphs">16 Jun 00:00</text>
<text x="1346.6" y="739.2" textLength="72.2" lengthAdjust="spacingAndGlyphs">17 Jun 00:00</text>
<text x="1442.6" y="739.2" textLength="72.2" lengthAdjust="spacingAndGlyphs">18 Jun 00:00</text>
<g shape-rendering="crispEdges">
<rect x="2" y="2" width="1" height="563" fill="#000"/>
<rect x="2" y="566" width="1" height="158" fill="#000"/>
<rect x="1852" y="2" width="1" height="563" fill="#000"/>
<rect x="1852" y="566" width="1" height="158" fill="#000"/>
</g>
</svg></body></html>
